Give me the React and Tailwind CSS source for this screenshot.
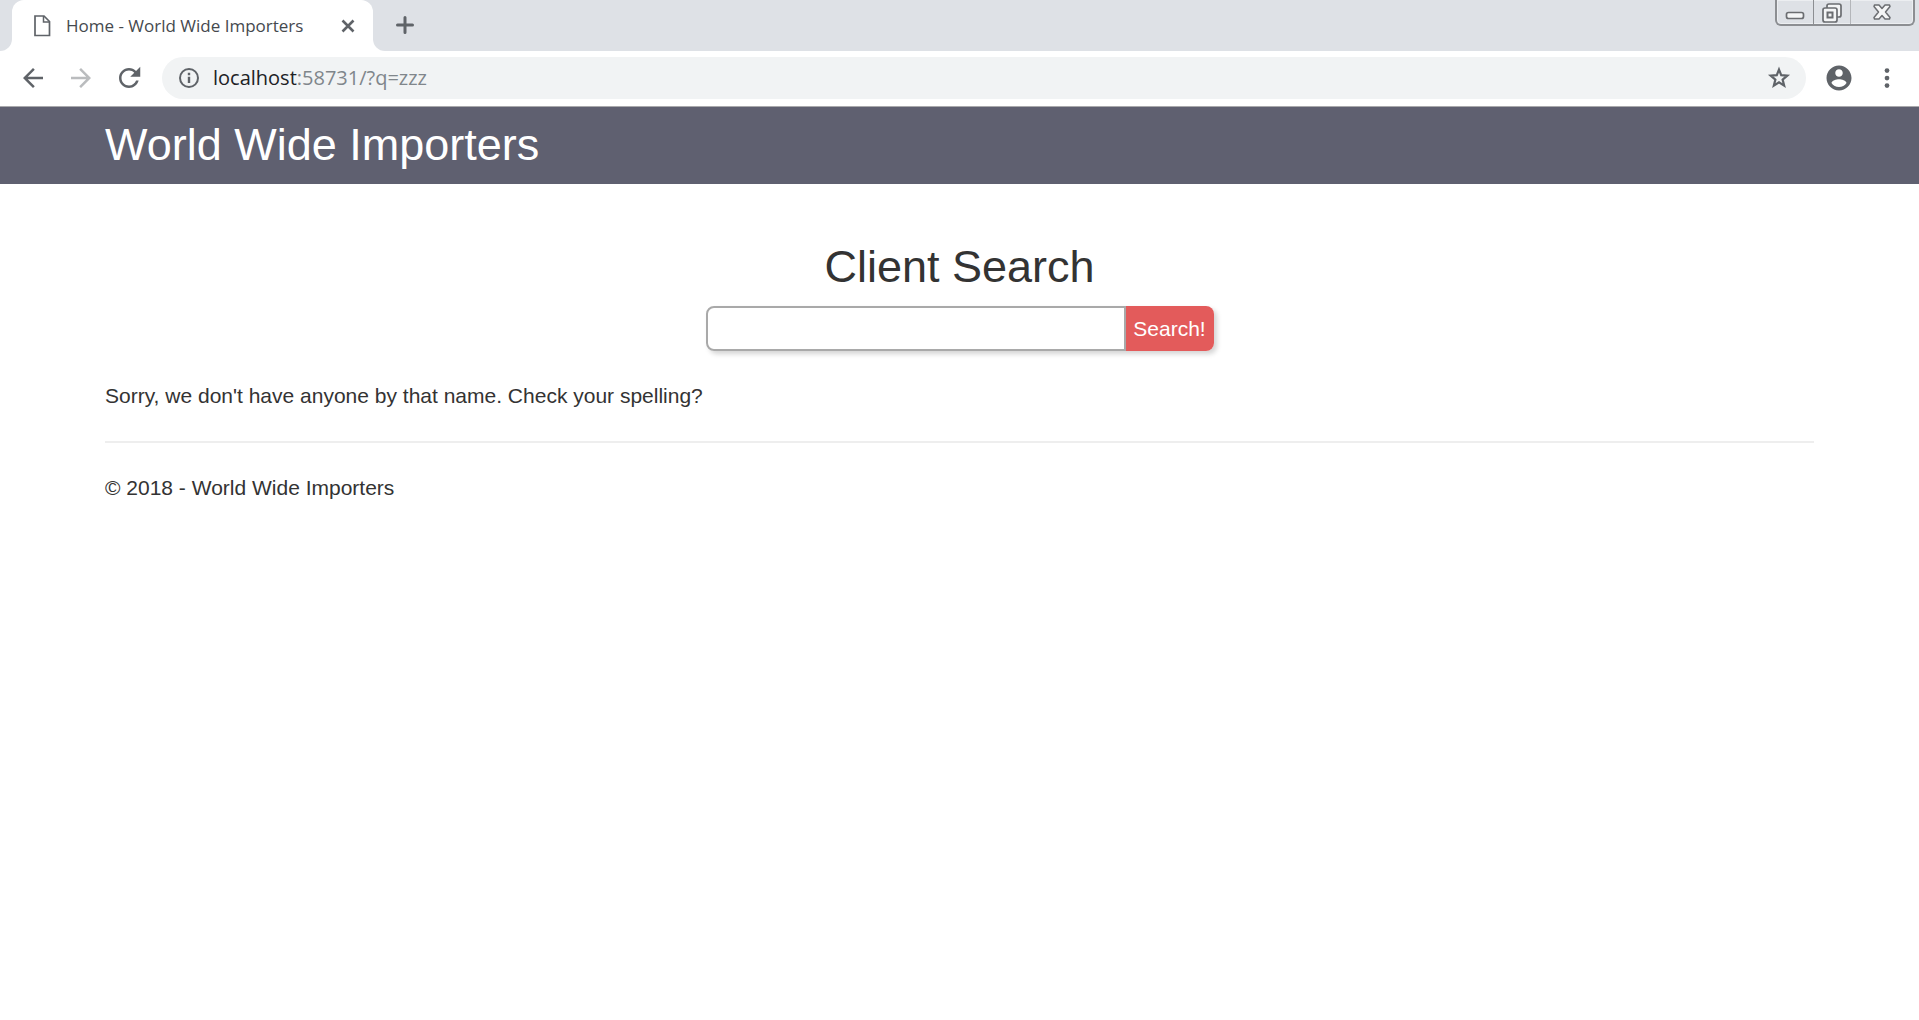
import React from "react";

function BrowserTabs() {
  return (
    <div className="flex h-[51px] items-start bg-[#dee1e6]">
      <div className="flex h-full w-3 bg-white">
        <div className="w-full rounded-br-xl bg-[#dee1e6]" />
      </div>
      <div className="flex h-full w-[361px] shrink-0 bg-[#dee1e6]">
        <div className="flex h-full w-full items-center rounded-t-xl bg-white pr-[15px] pl-[21px]">
          <svg className="mr-[15px] h-[24px] w-[18px] shrink-0" viewBox="0 0 18 24" fill="none" stroke="#5f6368" strokeWidth="1.700">
            <path d="M2 2H11L16.500 7.500V21.500H2Z" />
            <path d="M10.500 2V8H16.500" strokeWidth="1.500" />
          </svg>
          <span className="grow whitespace-nowrap font-['Open_Sans',sans-serif] text-[17px] leading-6 text-[#45494e]">
            Home - World Wide Importers
          </span>
          <button type="button" aria-label="Close tab" className="h-5 w-5">
            <svg viewBox="0 0 20 20" fill="none" stroke="#5f6368" strokeWidth="2.600">
              <path d="M4.500 4.500L15.500 15.500M15.500 4.500L4.500 15.500" />
            </svg>
          </button>
        </div>
      </div>
      <div className="flex h-full grow bg-white">
        <div className="flex h-full grow items-start justify-between rounded-bl-xl bg-[#dee1e6] pr-1 pl-[22px]">
          <button type="button" aria-label="New tab" className="mt-[15px] h-5 w-5">
            <svg viewBox="0 0 20 20" fill="none" stroke="#5f6368" strokeWidth="3" strokeLinecap="round">
              <path d="M10 2.500V17.500M2.500 10H17.500" />
            </svg>
          </button>
          <div className="flex h-[26px] w-[140px] rounded-b-md border-2 border-t-0 border-[#8c8e92] shadow-[inset_0_0_0_1px_#eceef1]">
            <button type="button" aria-label="Minimize" className="flex w-[37px] justify-center border-r border-[#8c8e92]">
              <svg className="h-6 w-6" viewBox="0 0 24 24" fill="#f4f5f6" stroke="#6b6d71" strokeWidth="1.700">
                <rect x="3.500" y="12.500" width="17" height="6" rx="2" />
              </svg>
            </button>
            <button type="button" aria-label="Restore" className="flex w-[37px] justify-center border-r border-[#b4b6ba]">
              <svg className="h-6 w-6" viewBox="0 0 24 24" fill="#f4f5f6" stroke="#6b6d71" strokeWidth="1.700">
                <rect x="7" y="4" width="14" height="13" rx="2" />
                <rect x="3" y="8" width="14" height="14" rx="2" />
                <rect x="7.500" y="12.500" width="5" height="5" strokeWidth="2" />
              </svg>
            </button>
            <button type="button" aria-label="Close window" className="flex grow justify-center">
              <svg className="h-6 w-6" viewBox="0 0 24 24" fill="#f4f5f6" stroke="#6b6d71" strokeWidth="1.500" strokeLinejoin="round">
                <path d="M4.500 5H9L12 8.500L15 5H19.500L20 6.500L15.500 12L20 17.500L19.500 19H15L12 15.500L9 19H4.500L4 17.500L8.500 12L4 6.500Z" />
              </svg>
            </button>
          </div>
        </div>
      </div>
    </div>
  );
}

function Toolbar() {
  return (
    <div className="flex items-center border-b border-[#a9a9ac] bg-white pt-1.5 pr-[17px] pb-[7px] pl-[18px]">
      <button type="button" aria-label="Back" className="h-[30px] w-[30px]">
        <svg viewBox="0 0 24 24" fill="#5f6368">
          <path d="M20 11H7.830l5.590-5.590L12 4l-8 8 8 8 1.410-1.410L7.830 13H20z" />
        </svg>
      </button>
      <button type="button" aria-label="Forward" className="ml-[18px] h-[30px] w-[30px]">
        <svg viewBox="0 0 24 24" fill="#babcbe">
          <path d="M12 4l-1.410 1.410L16.170 11H4v2h12.170l-5.580 5.590L12 20l8-8z" />
        </svg>
      </button>
      <button type="button" aria-label="Reload" className="ml-[18px] h-[30px] w-[30px]">
        <svg viewBox="0 0 24 24" fill="#5f6368">
          <path d="M17.650 6.350C16.200 4.900 14.210 4 12 4c-4.420 0-7.990 3.580-7.990 8s3.570 8 7.990 8c3.730 0 6.840-2.550 7.730-6h-2.080c-.82 2.330-3.040 4-5.650 4-3.310 0-6-2.690-6-6s2.690-6 6-6c1.660 0 3.140.69 4.220 1.780L13 11h8V3z" />
        </svg>
      </button>
      <div className="ml-[18px] flex h-[42px] grow items-center rounded-full bg-[#f1f3f4] pr-[13px] pl-[17px]">
        <svg className="h-5 w-5 shrink-0" viewBox="2 2 20 20" fill="#5f6368">
          <path d="M10.800 6.800h2.400v2.400h-2.400zM10.800 10.800h2.400v6.200h-2.400zM12 2a10 10 0 100 20 10 10 0 000-20zm0 18a8 8 0 110-16 8 8 0 010 16z" />
        </svg>
        <p className="ml-[14px] grow whitespace-nowrap font-['Open_Sans',sans-serif] text-xl leading-7 text-[#80868b]">
          <span className="text-[#202124]">localhost</span>:58731/?q=zzz
        </p>
        <button type="button" aria-label="Bookmark this page" className="h-7 w-7">
          <svg viewBox="0 0 24 24" fill="none" stroke="#5f6368" strokeWidth="1.900">
            <path d="M12 4.800L13.900 9.600L19.100 10L15.100 13.400L16.400 18.500L12 15.700L7.600 18.500L8.900 13.400L4.900 10L10.100 9.600Z" />
          </svg>
        </button>
      </div>
      <button type="button" aria-label="Profile" className="ml-[18px] h-[30px] w-[30px]">
        <svg viewBox="0 0 24 24" fill="#5f6368">
          <path d="M12 2C6.480 2 2 6.480 2 12s4.480 10 10 10 10-4.480 10-10S17.520 2 12 2zm0 3c1.660 0 3 1.340 3 3s-1.340 3-3 3-3-1.340-3-3 1.340-3 3-3zm0 14.200c-2.500 0-4.710-1.280-6-3.220.03-1.990 4-3.080 6-3.080 1.990 0 5.970 1.090 6 3.080-1.290 1.940-3.500 3.220-6 3.220z" />
        </svg>
      </button>
      <button type="button" aria-label="Menu" className="ml-[18px] h-[30px] w-[30px]">
        <svg viewBox="0 0 24 24" fill="#5f6368">
          <circle cx="12" cy="6" r="1.900" />
          <circle cx="12" cy="12" r="1.900" />
          <circle cx="12" cy="18" r="1.900" />
        </svg>
      </button>
    </div>
  );
}

export default function App() {
  return (
    <div className="min-h-screen bg-white font-['Liberation_Sans',Arial,sans-serif] text-[21px] leading-[30px] text-[#333333]">
      <BrowserTabs />
      <Toolbar />
      <header className="bg-[#5f6070] px-[105px] pt-[13px] pb-3.5 text-[45px] leading-[50px] text-white">
        World Wide Importers
      </header>
      <main className="px-[105px] pt-[58px]">
        <h1 className="text-center text-[45px] leading-[50px]">Client Search</h1>
        <form className="mx-auto mt-[14px] flex h-[45px] w-[508px] rounded-lg shadow-[3px_3px_5px_#d4d4d4]" onSubmit={(e) => e.preventDefault()}>
          <input
            type="text"
            name="q"
            aria-label="Client name"
            className="min-w-0 grow rounded-l-lg border-2 border-[#a9a9a9] bg-white px-2 outline-none"
          />
          <button type="submit" className="w-[88px] rounded-r-lg bg-[#e35b5b] text-white">
            Search!
          </button>
        </form>
        <p className="mt-[30px]">Sorry, we don't have anyone by that name. Check your spelling?</p>
        <hr className="mt-[30px] border-t-2 border-[#eeeeee]" />
        <footer className="mt-[30px]">© 2018 - World Wide Importers</footer>
      </main>
    </div>
  );
}
